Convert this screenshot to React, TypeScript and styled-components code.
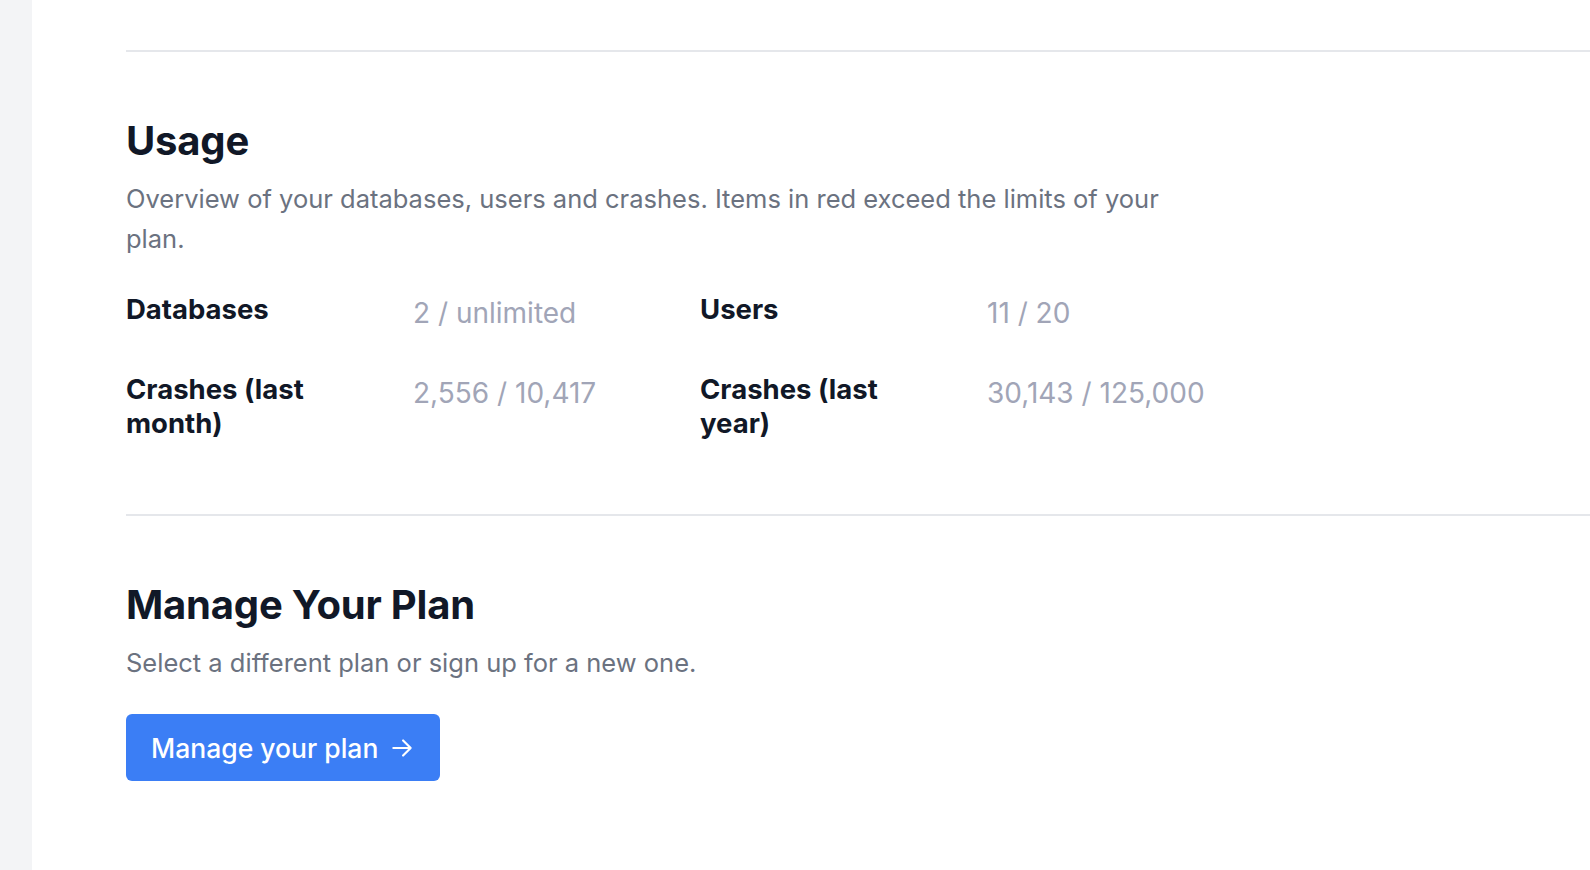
import React from 'react';
import styled, { createGlobalStyle } from 'styled-components';

const GlobalStyle = createGlobalStyle`
  html, body {
    margin: 0;
    padding: 0;
    background: #ffffff;
    font-family: Inter, "Noto Sans", "Liberation Sans", sans-serif;
    -webkit-font-smoothing: antialiased;
  }
  * {
    box-sizing: border-box;
  }
`;

const Shell = styled.div`
  display: flex;
  min-height: 870px;
`;

const SideRail = styled.aside`
  width: 32px;
  flex-shrink: 0;
  background: #f3f4f6;
`;

const Main = styled.main`
  flex: 1;
  padding: 50px 0 0 94px;
  overflow: hidden;
`;

const Section = styled.section`
  border-top: 2px solid #e5e7eb;
  padding: 65px 0 74px;
`;

const Heading = styled.h2`
  margin: 0;
  font-size: 40px;
  line-height: 48px;
  font-weight: 700;
  color: #111827;
  letter-spacing: -0.2px;
`;

const Description = styled.p`
  margin: 14px 0 0;
  max-width: 1060px;
  font-size: 25.5px;
  line-height: 40px;
  color: #6b7280;
`;

const UsageGrid = styled.dl`
  display: grid;
  grid-template-columns: repeat(4, 239px);
  column-gap: 48px;
  row-gap: 40px;
  margin: 33px 0 0;
`;

const Label = styled.dt`
  margin: 0;
  font-size: 27.5px;
  line-height: 34px;
  font-weight: 700;
  color: #111827;
`;

const Value = styled.dd<{ $over?: boolean }>`
  margin: 0;
  padding-top: 2px;
  font-size: 28px;
  line-height: 38px;
  color: ${p => (p.$over ? '#ef4444' : '#a1a5b7')};
`;

const PrimaryButton = styled.button`
  margin-top: 31px;
  display: inline-flex;
  align-items: center;
  gap: 11px;
  height: 67px;
  padding: 0 25px;
  border: none;
  border-radius: 6px;
  background: #3b7ef5;
  color: #ffffff;
  font-family: inherit;
  font-size: 26.5px;
  font-weight: 500;
  cursor: pointer;
`;

const usage = [
  { label: 'Databases', value: '2 / unlimited' },
  { label: 'Users', value: '11 / 20' },
  { label: 'Crashes (last month)', value: '2,556 / 10,417' },
  { label: 'Crashes (last year)', value: '30,143 / 125,000' },
];

const ArrowRight = () => (
  <svg width="26" height="26" viewBox="0 0 24 24" fill="none" stroke="currentColor" strokeWidth="2" strokeLinecap="round" strokeLinejoin="round">
    <path d="M4 12h16M13 5l7 7-7 7" />
  </svg>
);

export default function App() {
  return (
    <>
      <GlobalStyle />
      <Shell>
        <SideRail />
        <Main>
          <Section>
            <Heading>Usage</Heading>
            <Description>
              Overview of your databases, users and crashes. Items in red exceed the limits of your plan.
            </Description>
            <UsageGrid>
              {usage.map(item => (
                <React.Fragment key={item.label}>
                  <Label>{item.label}</Label>
                  <Value>{item.value}</Value>
                </React.Fragment>
              ))}
            </UsageGrid>
          </Section>
          <Section>
            <Heading>Manage Your Plan</Heading>
            <Description>Select a different plan or sign up for a new one.</Description>
            <PrimaryButton>
              Manage your plan
              <ArrowRight />
            </PrimaryButton>
          </Section>
        </Main>
      </Shell>
    </>
  );
}
